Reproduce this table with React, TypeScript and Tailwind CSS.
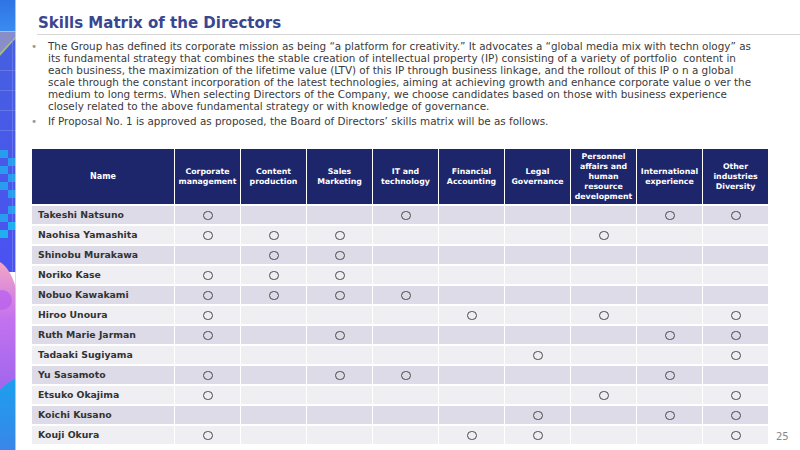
import React from "react";

const skills = [
  ["Corporate", "management"],
  ["Content", "production"],
  ["Sales", "Marketing"],
  ["IT and", "technology"],
  ["Financial", "Accounting"],
  ["Legal", "Governance"],
  ["Personnel", "affairs and", "human", "resource", "development"],
  ["International", "experience"],
  ["Other", "industries", "Diversity"],
];

// 1 = has the skill, order follows `skills`
const directors: [string, number[]][] = [
  ["Takeshi Natsuno", [1, 0, 0, 1, 0, 0, 0, 1, 1]],
  ["Naohisa Yamashita", [1, 1, 1, 0, 0, 0, 1, 0, 0]],
  ["Shinobu Murakawa", [0, 1, 1, 0, 0, 0, 0, 0, 0]],
  ["Noriko Kase", [1, 1, 1, 0, 0, 0, 0, 0, 0]],
  ["Nobuo Kawakami", [1, 1, 1, 1, 0, 0, 0, 0, 0]],
  ["Hiroo Unoura", [1, 0, 0, 0, 1, 0, 1, 0, 1]],
  ["Ruth Marie Jarman", [1, 0, 1, 0, 0, 0, 0, 1, 1]],
  ["Tadaaki Sugiyama", [0, 0, 0, 0, 0, 1, 0, 0, 1]],
  ["Yu Sasamoto", [1, 0, 1, 1, 0, 0, 0, 1, 0]],
  ["Etsuko Okajima", [1, 0, 0, 0, 0, 0, 1, 0, 1]],
  ["Koichi Kusano", [0, 0, 0, 0, 0, 1, 0, 1, 1]],
  ["Kouji Okura", [1, 0, 0, 0, 1, 1, 0, 0, 1]],
];

const intro = [
  "The Group has defined its corporate mission as being \u201ca platform for creativity.\u201d It advocates a \u201cglobal media mix with techn ology\u201d as",
  "its fundamental strategy that combines the stable creation of intellectual property (IP) consisting of a variety of portfolio  content in",
  "each business, the maximization of the lifetime value (LTV) of this IP through business linkage, and the rollout of this IP o n a global",
  "scale through the constant incorporation of the latest technologies, aiming at achieving growth and enhance corporate value o ver the",
  "medium to long terms. When selecting Directors of the Company, we choose candidates based on those with business experience",
  "closely related to the above fundamental strategy or with knowledge of governance.",
];

function SideStrip() {
  const checks = [];
  for (let r = 0; r < 11; r++) {
    for (let c = 0; c < 2; c++) {
      if ((r + c) % 2 === 0 && r !== 6) {
        checks.push(<rect key={`${r}-${c}`} x={c * 8} y={150 + r * 8} width="8" height="8" fill="#1fb4ee" opacity={r > 8 ? 0.95 : 0.75} />);
      }
    }
  }
  return (
    <svg width="16" height="450" viewBox="0 0 16 450" className="shrink-0">
      <defs>
        <linearGradient id="top" x1="0" y1="0" x2="0" y2="1">
          <stop offset="0" stopColor="#2f74e4" />
          <stop offset="1" stopColor="#3a8cf0" />
        </linearGradient>
        <linearGradient id="mid" x1="0" y1="0" x2="0" y2="1">
          <stop offset="0" stopColor="#4660e0" />
          <stop offset="1" stopColor="#4a52f2" />
        </linearGradient>
        <linearGradient id="pink" x1="0" y1="0" x2="0" y2="1">
          <stop offset="0" stopColor="#f2a6c4" />
          <stop offset="0.3" stopColor="#c472ee" />
          <stop offset="1" stopColor="#7e5cf0" />
        </linearGradient>
        <linearGradient id="bottom" x1="0" y1="0" x2="0" y2="1">
          <stop offset="0" stopColor="#1aa0ee" />
          <stop offset="1" stopColor="#3a86e8" />
        </linearGradient>
      </defs>
      <rect x="0" y="0" width="16" height="32" fill="url(#top)" />
      <rect x="0" y="31" width="16" height="1.5" fill="#7fd0ff" />
      <rect x="0" y="32" width="16" height="240" fill="url(#mid)" />
      <polygon points="0,32 16,32 16,38 0,55" fill="#8a8ec8" />
      <polygon points="0,53 16,36 16,38 0,56" fill="#b8d060" opacity="0.7" />
      {[70, 90, 110, 130].map((y) => (
        <rect key={y} x="0" y={y} width="16" height="0.6" fill="#7a88f0" />
      ))}
      <rect x="12" y="32" width="0.6" height="240" fill="#7a88f0" />
      {checks}
      <path d="M0,262 Q10,268 16,288 L16,450 L0,450 Z" fill="url(#pink)" />
      <circle cx="2" cy="300" r="10" fill="#b85cf0" opacity="0.7" />
      <path d="M0,390 Q8,382 16,378 L16,450 L0,450 Z" fill="url(#bottom)" />
      <rect x="15" y="0" width="1" height="450" fill="#c8d4f8" opacity="0.8" />
    </svg>
  );
}

function Mark() {
  return <div className="h-[9px] w-[10px] rounded-full border border-[#4a4a4a]" />;
}

export default function App() {
  return (
    <div className="flex h-[450px] w-[800px] overflow-hidden bg-white font-['DejaVu_Sans',Verdana,sans-serif] text-[#333]">
      <SideStrip />
      <div className="flex min-w-0 flex-1 flex-col">
        <div className="ml-[21px] border-b-[1.5px] border-[#d6d6d6] pt-[13px] pb-[1px]">
          <h1 className="pl-[1px] text-[15px] leading-[20px] font-bold text-[#394691]">Skills Matrix of the Directors</h1>
        </div>

        <div className="mt-[5px] flex flex-col gap-[3px] pl-[15px] text-[10.4px] leading-[12px] text-[#3a3a3a]">
          <div className="flex">
            <span className="w-[17px] text-[#9a9a9a]">•</span>
            <div className="flex flex-col whitespace-pre">
              {intro.map((l, i) => (
                <span key={i}>{l}</span>
              ))}
            </div>
          </div>
          <div className="flex">
            <span className="w-[17px] text-[#9a9a9a]">•</span>
            <span>If Proposal No. 1 is approved as proposed, the Board of Directors’ skills matrix will be as follows.</span>
          </div>
        </div>

        <div className="mt-[22px] flex items-end">
          <div className="ml-[16px] grid grid-cols-[142px_repeat(9,65px)] gap-x-px gap-y-[2px]">
            <div className="flex h-[55px] items-center justify-center bg-[#1e266b] text-[8px] leading-[10px] font-bold text-white">
              Name
            </div>
            {skills.map((s, i) => (
              <div key={i} className="flex h-[55px] flex-col items-center justify-center bg-[#1e266b] text-center text-[7.8px] leading-[10px] font-bold text-white">
                {s.map((w, j) => (
                  <span key={j}>{w}</span>
                ))}
              </div>
            ))}
            {directors.map(([name, marks], r) => {
              const bg = r % 2 === 0 ? "bg-[#dcdbe7]" : "bg-[#eeeef3]";
              return (
                <React.Fragment key={name}>
                  <div className={`flex h-[18px] items-center pl-[6px] text-[9.3px] font-bold text-[#333] ${bg}`}>{name}</div>
                  {marks.map((m, c) => (
                    <div key={c} className={`flex h-[18px] items-center justify-center ${bg}`}>
                      {m ? <Mark /> : null}
                    </div>
                  ))}
                </React.Fragment>
              );
            })}
          </div>
          <span className="ml-[8px] text-[10px] leading-[14px] text-[#888]">25</span>
        </div>
      </div>
    </div>
  );
}
